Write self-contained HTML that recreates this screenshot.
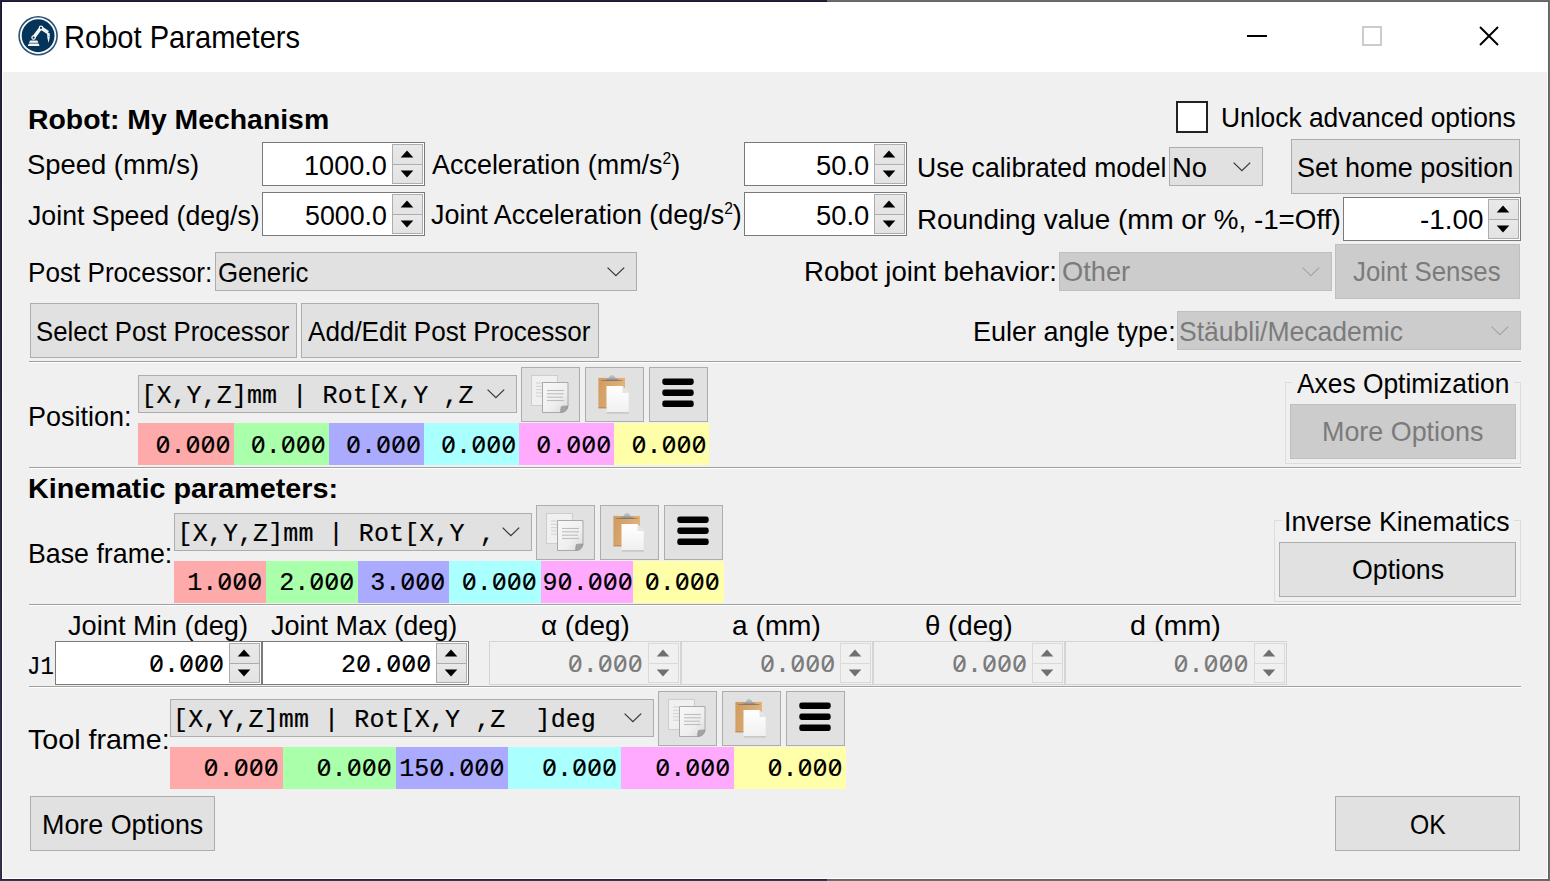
<!DOCTYPE html><html><head><meta charset="utf-8"><style>
html,body{margin:0;padding:0;width:1550px;height:881px;overflow:hidden;background:#f0f0f0;font-family:'Liberation Sans',sans-serif}
.t{position:absolute;white-space:pre;line-height:1;transform-origin:0 0}
.z{position:relative;display:inline-block}
.z::before{content:"";position:absolute;left:4.9px;top:7.6px;width:5px;height:6px;background:var(--bg)}
.z::after{content:"";position:absolute;left:6.5px;top:4.5px;width:1.9px;height:12.6px;background:currentColor;transform:rotate(35deg)}
</style></head><body>
<div style="position:absolute;left:0px;top:0px;width:1550px;height:881px;box-sizing:border-box;background:#6c6c6c"></div>
<div style="position:absolute;left:1px;top:1px;width:1548px;height:879px;box-sizing:border-box;background:#646464"></div>
<div style="position:absolute;left:0px;top:0px;width:827px;height:881px;box-sizing:border-box;background:linear-gradient(#22223a,#34344c)"></div>
<div style="position:absolute;left:1px;top:1px;width:826px;height:879px;box-sizing:border-box;background:linear-gradient(#16162c,#26263e)"></div>
<div style="position:absolute;left:2px;top:2px;width:1546px;height:877px;box-sizing:border-box;background:#ffffff"></div>
<div style="position:absolute;left:3px;top:72px;width:1544px;height:806px;box-sizing:border-box;background:#f0f0f0"></div>
<div style="position:absolute;left:2px;top:2px;width:1546px;height:70px;box-sizing:border-box;background:#ffffff"></div>
<svg style="position:absolute;left:17px;top:15px" width="42" height="42" viewBox="0 0 42 42">
<circle cx="21.1" cy="20.75" r="19.8" fill="#2b5274"/>
<circle cx="21.1" cy="20.75" r="18.2" fill="#ffffff"/>
<circle cx="21.1" cy="20.75" r="16.4" fill="#04345a"/>
<polygon points="10.8,31 22.6,31 20.4,25.6 13,25.6" fill="#f4f4f4"/>
<line x1="11" y1="28.2" x2="22" y2="28.2" stroke="#04345a" stroke-width="0.7"/>
<g stroke="#f4f4f4" fill="none" stroke-width="3.4">
<line x1="16.6" y1="22.6" x2="23.8" y2="13"/>
<line x1="24.2" y1="13" x2="31" y2="17.5"/>
</g>
<circle cx="16.6" cy="22.6" r="2.3" fill="#f4f4f4"/>
<circle cx="16.6" cy="22.6" r="1.1" fill="#04345a"/>
<circle cx="24" cy="12.9" r="2.3" fill="#f4f4f4"/>
<circle cx="24" cy="12.9" r="1.1" fill="#04345a"/>
<polygon points="30,17.5 32.6,18 32.8,21 30.2,21" fill="#f4f4f4"/>
<polygon points="30,21.2 33,21.2 31.6,28" fill="#f4f4f4"/>
</svg>
<div class="t" style="left:63.59px;top:22.07px;font-family:'Liberation Sans';font-size:30.5px;font-weight:400;color:#000;transform:scaleX(0.9537);">Robot Parameters</div>
<div style="position:absolute;left:1247px;top:35px;width:20px;height:2px;box-sizing:border-box;background:#000"></div>
<div style="position:absolute;left:1362px;top:26px;width:20px;height:20px;box-sizing:border-box;border:2px solid #cccccc"></div>
<svg style="position:absolute;left:1478px;top:25px" width="22" height="22"><path d="M2,2 L20,20 M20,2 L2,20" stroke="#000" stroke-width="2"/></svg>
<div class="t" style="left:28.31px;top:104.78px;font-family:'Liberation Sans';font-size:28.5px;font-weight:700;color:#000;transform:scaleX(0.9957);">Robot: My Mechanism</div>
<div style="position:absolute;left:1176px;top:101px;width:32px;height:32px;box-sizing:border-box;background:#fff;border:2px solid #222"></div>
<div class="t" style="left:1221.45px;top:103.28px;font-family:'Liberation Sans';font-size:28.5px;font-weight:400;color:#000;transform:scaleX(0.9253);">Unlock advanced options</div>
<div class="t" style="left:27.38px;top:150.47px;font-family:'Liberation Sans';font-size:28.5px;font-weight:400;color:#000;transform:scaleX(0.9611);">Speed (mm/s)</div>
<div style="position:absolute;left:262px;top:142px;width:163px;height:44px;box-sizing:border-box;background:#fff;border:1px solid #7a7a7a"></div>
<div style="position:absolute;left:392px;top:144px;width:31px;height:21px;box-sizing:border-box;background:linear-gradient(#e9e9e9,#e3e3e3);border:1px solid #adadad"></div>
<div style="position:absolute;left:392px;top:164px;width:31px;height:20px;box-sizing:border-box;background:linear-gradient(#e9e9e9,#e3e3e3);border:1px solid #adadad"></div>
<svg style="position:absolute;left:0;top:0;overflow:visible" width="1" height="1"><polygon points="400.70,157.40 413.30,157.40 407.00,150.60" fill="#000"/></svg>
<svg style="position:absolute;left:0;top:0;overflow:visible" width="1" height="1"><polygon points="400.70,170.60 413.30,170.60 407.00,177.40" fill="#000"/></svg>
<div class="t" style="left:304.30px;top:150.97px;font-family:'Liberation Sans';font-size:28.5px;font-weight:400;color:#000;transform:scaleX(0.9512);">1000.0</div>
<div class="t" style="left:432.20px;top:149.58px;font-family:'Liberation Sans';font-size:28.5px;font-weight:400;color:#000;transform:scaleX(0.9452);">Acceleration (mm/s<span style="font-size:16.5px;position:relative;top:-9.5px">2</span>)</div>
<div style="position:absolute;left:744px;top:142px;width:163px;height:44px;box-sizing:border-box;background:#fff;border:1px solid #7a7a7a"></div>
<div style="position:absolute;left:874px;top:144px;width:31px;height:21px;box-sizing:border-box;background:linear-gradient(#e9e9e9,#e3e3e3);border:1px solid #adadad"></div>
<div style="position:absolute;left:874px;top:164px;width:31px;height:20px;box-sizing:border-box;background:linear-gradient(#e9e9e9,#e3e3e3);border:1px solid #adadad"></div>
<svg style="position:absolute;left:0;top:0;overflow:visible" width="1" height="1"><polygon points="882.70,157.40 895.30,157.40 889.00,150.60" fill="#000"/></svg>
<svg style="position:absolute;left:0;top:0;overflow:visible" width="1" height="1"><polygon points="882.70,170.60 895.30,170.60 889.00,177.40" fill="#000"/></svg>
<div class="t" style="left:816.14px;top:150.97px;font-family:'Liberation Sans';font-size:28.5px;font-weight:400;color:#000;transform:scaleX(0.9604);">50.0</div>
<div class="t" style="left:917.14px;top:152.68px;font-family:'Liberation Sans';font-size:28.5px;font-weight:400;color:#000;transform:scaleX(0.9318);">Use calibrated model</div>
<div style="position:absolute;left:1169px;top:147px;width:94px;height:39px;box-sizing:border-box;background:#e1e1e1;border:1px solid #adadad"></div>
<svg style="position:absolute;left:1231.5px;top:160.5px" width="20" height="12"><polyline points="1.6,1.6 9.9,9.7 18.2,1.6" fill="none" stroke="#3a3a3a" stroke-width="1.3"/></svg>
<div class="t" style="left:1171.88px;top:152.68px;font-family:'Liberation Sans';font-size:28.5px;font-weight:400;color:#000;transform:scaleX(0.9576);">No</div>
<div style="position:absolute;left:1291px;top:139px;width:229px;height:55px;box-sizing:border-box;background:#e1e1e1;border:1px solid #adadad"></div>
<div class="t" style="left:1296.60px;top:152.68px;font-family:'Liberation Sans';font-size:28.5px;font-weight:400;color:#000;transform:scaleX(0.9482);">Set home position</div>
<div class="t" style="left:28.36px;top:200.78px;font-family:'Liberation Sans';font-size:28.5px;font-weight:400;color:#000;transform:scaleX(0.9376);">Joint Speed (deg/s)</div>
<div style="position:absolute;left:262px;top:192px;width:163px;height:44px;box-sizing:border-box;background:#fff;border:1px solid #7a7a7a"></div>
<div style="position:absolute;left:392px;top:194px;width:31px;height:21px;box-sizing:border-box;background:linear-gradient(#e9e9e9,#e3e3e3);border:1px solid #adadad"></div>
<div style="position:absolute;left:392px;top:214px;width:31px;height:20px;box-sizing:border-box;background:linear-gradient(#e9e9e9,#e3e3e3);border:1px solid #adadad"></div>
<svg style="position:absolute;left:0;top:0;overflow:visible" width="1" height="1"><polygon points="400.70,207.40 413.30,207.40 407.00,200.60" fill="#000"/></svg>
<svg style="position:absolute;left:0;top:0;overflow:visible" width="1" height="1"><polygon points="400.70,220.60 413.30,220.60 407.00,227.40" fill="#000"/></svg>
<div class="t" style="left:305.26px;top:200.78px;font-family:'Liberation Sans';font-size:28.5px;font-weight:400;color:#000;transform:scaleX(0.9400);">5000.0</div>
<div class="t" style="left:431.26px;top:199.58px;font-family:'Liberation Sans';font-size:28.5px;font-weight:400;color:#000;transform:scaleX(0.9440);">Joint Acceleration (deg/s<span style="font-size:16.5px;position:relative;top:-9.5px">2</span>)</div>
<div style="position:absolute;left:744px;top:192px;width:163px;height:44px;box-sizing:border-box;background:#fff;border:1px solid #7a7a7a"></div>
<div style="position:absolute;left:874px;top:194px;width:31px;height:21px;box-sizing:border-box;background:linear-gradient(#e9e9e9,#e3e3e3);border:1px solid #adadad"></div>
<div style="position:absolute;left:874px;top:214px;width:31px;height:20px;box-sizing:border-box;background:linear-gradient(#e9e9e9,#e3e3e3);border:1px solid #adadad"></div>
<svg style="position:absolute;left:0;top:0;overflow:visible" width="1" height="1"><polygon points="882.70,207.40 895.30,207.40 889.00,200.60" fill="#000"/></svg>
<svg style="position:absolute;left:0;top:0;overflow:visible" width="1" height="1"><polygon points="882.70,220.60 895.30,220.60 889.00,227.40" fill="#000"/></svg>
<div class="t" style="left:816.14px;top:200.78px;font-family:'Liberation Sans';font-size:28.5px;font-weight:400;color:#000;transform:scaleX(0.9604);">50.0</div>
<div class="t" style="left:917.05px;top:205.18px;font-family:'Liberation Sans';font-size:28.5px;font-weight:400;color:#000;transform:scaleX(0.9756);">Rounding value (mm or %, -1=Off)</div>
<div style="position:absolute;left:1343px;top:197px;width:178px;height:44px;box-sizing:border-box;background:#fff;border:1px solid #7a7a7a"></div>
<div style="position:absolute;left:1488px;top:199px;width:31px;height:21px;box-sizing:border-box;background:linear-gradient(#e9e9e9,#e3e3e3);border:1px solid #adadad"></div>
<div style="position:absolute;left:1488px;top:219px;width:31px;height:20px;box-sizing:border-box;background:linear-gradient(#e9e9e9,#e3e3e3);border:1px solid #adadad"></div>
<svg style="position:absolute;left:0;top:0;overflow:visible" width="1" height="1"><polygon points="1496.70,212.40 1509.30,212.40 1503.00,205.60" fill="#000"/></svg>
<svg style="position:absolute;left:0;top:0;overflow:visible" width="1" height="1"><polygon points="1496.70,225.60 1509.30,225.60 1503.00,232.40" fill="#000"/></svg>
<div class="t" style="left:1419.72px;top:205.18px;font-family:'Liberation Sans';font-size:28.5px;font-weight:400;color:#000;transform:scaleX(0.9778);">-1.00</div>
<div class="t" style="left:28.07px;top:257.97px;font-family:'Liberation Sans';font-size:28.5px;font-weight:400;color:#000;transform:scaleX(0.9157);">Post Processor:</div>
<div style="position:absolute;left:215px;top:252px;width:422px;height:39px;box-sizing:border-box;background:#e1e1e1;border:1px solid #adadad"></div>
<svg style="position:absolute;left:605.7px;top:265.5px" width="20" height="12"><polyline points="1.6,1.6 9.9,9.7 18.2,1.6" fill="none" stroke="#3a3a3a" stroke-width="1.3"/></svg>
<div class="t" style="left:218.29px;top:257.77px;font-family:'Liberation Sans';font-size:28.5px;font-weight:400;color:#000;transform:scaleX(0.9061);">Generic</div>
<div class="t" style="left:803.66px;top:257.38px;font-family:'Liberation Sans';font-size:28.5px;font-weight:400;color:#000;transform:scaleX(0.9677);">Robot joint behavior:</div>
<div style="position:absolute;left:1059px;top:252px;width:273px;height:39px;box-sizing:border-box;background:#cccccc;border:1px solid #bfbfbf"></div>
<svg style="position:absolute;left:1300.6px;top:265.5px" width="20" height="12"><polyline points="1.6,1.6 9.9,9.7 18.2,1.6" fill="none" stroke="#a6a6a6" stroke-width="1.3"/></svg>
<div class="t" style="left:1062.04px;top:257.17px;font-family:'Liberation Sans';font-size:28.5px;font-weight:400;color:#7b7b7b;transform:scaleX(0.9557);">Other</div>
<div style="position:absolute;left:1335px;top:244px;width:185px;height:55px;box-sizing:border-box;background:#cccccc;border:1px solid #bfbfbf"></div>
<div class="t" style="left:1353.20px;top:256.97px;font-family:'Liberation Sans';font-size:28.5px;font-weight:400;color:#7b7b7b;transform:scaleX(0.9043);">Joint Senses</div>
<div style="position:absolute;left:30px;top:303px;width:267px;height:55px;box-sizing:border-box;background:#e1e1e1;border:1px solid #adadad"></div>
<div class="t" style="left:35.69px;top:316.77px;font-family:'Liberation Sans';font-size:28.5px;font-weight:400;color:#000;transform:scaleX(0.9040);">Select Post Processor</div>
<div style="position:absolute;left:301px;top:303px;width:298px;height:55px;box-sizing:border-box;background:#e1e1e1;border:1px solid #adadad"></div>
<div class="t" style="left:308.10px;top:316.57px;font-family:'Liberation Sans';font-size:28.5px;font-weight:400;color:#000;transform:scaleX(0.9146);">Add/Edit Post Processor</div>
<div class="t" style="left:973.11px;top:316.77px;font-family:'Liberation Sans';font-size:28.5px;font-weight:400;color:#000;transform:scaleX(0.9474);">Euler angle type:</div>
<div style="position:absolute;left:1177px;top:311px;width:344px;height:39px;box-sizing:border-box;background:#cccccc;border:1px solid #bfbfbf"></div>
<svg style="position:absolute;left:1489.5px;top:324.5px" width="20" height="12"><polyline points="1.6,1.6 9.9,9.7 18.2,1.6" fill="none" stroke="#a6a6a6" stroke-width="1.3"/></svg>
<div class="t" style="left:1178.84px;top:316.57px;font-family:'Liberation Sans';font-size:28.5px;font-weight:400;color:#7b7b7b;transform:scaleX(0.9303);">Stäubli/Mecademic</div>
<div style="position:absolute;left:29px;top:361px;width:1492px;height:1px;box-sizing:border-box;background:#a0a0a0"></div>
<div style="position:absolute;left:29px;top:362px;width:1492px;height:1px;box-sizing:border-box;background:#ffffff"></div>
<div class="t" style="left:28.01px;top:401.88px;font-family:'Liberation Sans';font-size:28.5px;font-weight:400;color:#000;transform:scaleX(0.9467);">Position:</div>
<div style="position:absolute;left:138px;top:375px;width:379px;height:38px;box-sizing:border-box;background:#e1e1e1;border:1px solid #adadad"></div>
<svg style="position:absolute;left:485.5px;top:388.0px" width="20" height="12"><polyline points="1.6,1.6 9.9,9.7 18.2,1.6" fill="none" stroke="#3a3a3a" stroke-width="1.3"/></svg>
<div class="t" style="left:141.30px;top:384.00px;font-family:'Liberation Mono';font-size:25px;font-weight:400;color:#000;-webkit-text-stroke:0.2px #000;letter-spacing:0.1px;">[X,Y,Z]mm | Rot[X,Y ,Z</div>
<div style="position:absolute;left:521px;top:367px;width:59px;height:55px;box-sizing:border-box;background:#e1e1e1;border:1px solid #adadad"></div>
<div style="position:absolute;left:585px;top:367px;width:59px;height:55px;box-sizing:border-box;background:#e1e1e1;border:1px solid #adadad"></div>
<div style="position:absolute;left:649px;top:367px;width:59px;height:55px;box-sizing:border-box;background:#e1e1e1;border:1px solid #adadad"></div>
<svg style="position:absolute;left:521px;top:367px" width="59" height="55" viewBox="0 0 59 55">
<defs><linearGradient id="pg521" x1="0" y1="0" x2="1" y2="1"><stop offset="0" stop-color="#f8f8f8"/><stop offset="0.6" stop-color="#efefef"/><stop offset="1" stop-color="#d8d8d8"/></linearGradient></defs>
<rect x="10.5" y="8.5" width="26" height="30" fill="#f0f0f0" stroke="#cdcdcd" stroke-width="1"/>
<g stroke="#d2d2d2" stroke-width="1"><line x1="15" y1="16" x2="21" y2="16"/><line x1="15" y1="19.3" x2="21" y2="19.3"/><line x1="15" y1="22.6" x2="21" y2="22.6"/><line x1="15" y1="25.9" x2="21" y2="25.9"/><line x1="15" y1="29.2" x2="21" y2="29.2"/></g>
<path d="M21.5,15.5 H47 V39 Q46,45.3 39.5,45.5 H21.5 Z" fill="url(#pg521)" stroke="#a9a9a9" stroke-width="1"/>
<path d="M47,39 Q43,38.6 40.2,39.6 Q39.5,43 39.5,45.5 Q46,45.3 47,39 Z" fill="#a3a3a3" stroke="#8f8f8f" stroke-width="0.5"/>
<g stroke="#bdbdbd" stroke-width="1.1"><line x1="26" y1="23.5" x2="43" y2="23.5"/><line x1="26" y1="26.8" x2="43" y2="26.8"/><line x1="26" y1="30.2" x2="42" y2="30.2"/><line x1="26" y1="33.5" x2="43" y2="33.5"/></g>
</svg>
<svg style="position:absolute;left:585px;top:367px" width="59" height="55" viewBox="0 0 59 55">
<defs><linearGradient id="cb585" x1="0" y1="0" x2="1" y2="0.3"><stop offset="0" stop-color="#cf9a5e"/><stop offset="1" stop-color="#e2b47e"/></linearGradient>
<linearGradient id="cl585" x1="0" y1="0" x2="0" y2="1"><stop offset="0" stop-color="#cfcfcf"/><stop offset="0.7" stop-color="#a0a0a0"/><stop offset="1" stop-color="#707070"/></linearGradient>
<linearGradient id="pp585" x1="0" y1="0" x2="0" y2="1"><stop offset="0" stop-color="#ffffff"/><stop offset="1" stop-color="#f0f0f0"/></linearGradient></defs>
<rect x="13.4" y="10.9" width="26.6" height="30.3" fill="url(#cb585)"/>
<rect x="13.4" y="40.4" width="26.6" height="0.9" fill="#b58450"/>
<rect x="16.2" y="13" width="21.3" height="0.9" fill="#8a6a48" opacity="0.7"/>
<path d="M19,13.8 Q21,12 23.5,11 Q25,7.8 27,7.8 Q29,7.8 30.5,11 Q33,12 34.6,13.8 Z" fill="url(#cl585)"/>
<path d="M21.5,19 H37.5 L43.7,26 V45.3 H21.5 Z" fill="url(#pp585)"/>
<path d="M37.5,19 V26 H43.7 Z" fill="#e4e4e4"/>
<rect x="21.8" y="45.3" width="22" height="1.2" fill="#bdbdbd"/>
</svg>
<svg style="position:absolute;left:649px;top:367px" width="59" height="55" viewBox="0 0 59 55">
<g fill="#000"><rect x="13.3" y="11.4" width="31.4" height="6.5" rx="2.4"/><rect x="13.3" y="22.5" width="31.4" height="6.5" rx="2.4"/><rect x="13.3" y="33.6" width="31.4" height="6.5" rx="2.4"/></g>
</svg>
<div style="position:absolute;left:138px;top:423px;width:96px;height:42px;box-sizing:border-box;background:#ffaaaa"></div>
<div style="position:absolute;left:234px;top:423px;width:95px;height:42px;box-sizing:border-box;background:#aaffaa"></div>
<div style="position:absolute;left:329px;top:423px;width:95px;height:42px;box-sizing:border-box;background:#aaaaff"></div>
<div style="position:absolute;left:424px;top:423px;width:95px;height:42px;box-sizing:border-box;background:#aaffff"></div>
<div style="position:absolute;left:519px;top:423px;width:95px;height:42px;box-sizing:border-box;background:#ffaaff"></div>
<div style="position:absolute;left:614px;top:423px;width:95px;height:42px;box-sizing:border-box;background:#ffffaa"></div>
<div class="t" style="left:155.50px;top:433.60px;font-family:'Liberation Mono';font-size:25px;font-weight:400;color:#000;-webkit-text-stroke:0.2px #000;--bg:#ffaaaa;"><span class="z">0</span>.<span class="z">0</span><span class="z">0</span><span class="z">0</span></div>
<div class="t" style="left:250.70px;top:433.60px;font-family:'Liberation Mono';font-size:25px;font-weight:400;color:#000;-webkit-text-stroke:0.2px #000;--bg:#aaffaa;"><span class="z">0</span>.<span class="z">0</span><span class="z">0</span><span class="z">0</span></div>
<div class="t" style="left:345.90px;top:433.60px;font-family:'Liberation Mono';font-size:25px;font-weight:400;color:#000;-webkit-text-stroke:0.2px #000;--bg:#aaaaff;"><span class="z">0</span>.<span class="z">0</span><span class="z">0</span><span class="z">0</span></div>
<div class="t" style="left:441.10px;top:433.60px;font-family:'Liberation Mono';font-size:25px;font-weight:400;color:#000;-webkit-text-stroke:0.2px #000;--bg:#aaffff;"><span class="z">0</span>.<span class="z">0</span><span class="z">0</span><span class="z">0</span></div>
<div class="t" style="left:536.30px;top:433.60px;font-family:'Liberation Mono';font-size:25px;font-weight:400;color:#000;-webkit-text-stroke:0.2px #000;--bg:#ffaaff;"><span class="z">0</span>.<span class="z">0</span><span class="z">0</span><span class="z">0</span></div>
<div class="t" style="left:631.50px;top:433.60px;font-family:'Liberation Mono';font-size:25px;font-weight:400;color:#000;-webkit-text-stroke:0.2px #000;--bg:#ffffaa;"><span class="z">0</span>.<span class="z">0</span><span class="z">0</span><span class="z">0</span></div>
<div style="position:absolute;left:1285px;top:382px;width:236px;height:82px;box-sizing:border-box;border:1px solid #dcdcdc"></div>
<div style="position:absolute;left:1292px;top:368px;width:222px;height:30px;box-sizing:border-box;background:#f0f0f0"></div>
<div class="t" style="left:1297.40px;top:368.77px;font-family:'Liberation Sans';font-size:28.5px;font-weight:400;color:#000;transform:scaleX(0.9250);">Axes Optimization</div>
<div style="position:absolute;left:1290px;top:404px;width:226px;height:55px;box-sizing:border-box;background:#cccccc;border:1px solid #bfbfbf"></div>
<div class="t" style="left:1321.71px;top:417.17px;font-family:'Liberation Sans';font-size:28.5px;font-weight:400;color:#7b7b7b;transform:scaleX(0.9435);">More Options</div>
<div style="position:absolute;left:29px;top:467px;width:1492px;height:1px;box-sizing:border-box;background:#a0a0a0"></div>
<div style="position:absolute;left:29px;top:468px;width:1492px;height:1px;box-sizing:border-box;background:#ffffff"></div>
<div class="t" style="left:28.48px;top:473.77px;font-family:'Liberation Sans';font-size:28.5px;font-weight:700;color:#000;transform:scaleX(1.0089);">Kinematic parameters:</div>
<div class="t" style="left:28.32px;top:539.48px;font-family:'Liberation Sans';font-size:28.5px;font-weight:400;color:#000;transform:scaleX(0.9389);">Base frame:</div>
<div style="position:absolute;left:174px;top:513px;width:358px;height:38px;box-sizing:border-box;background:#e1e1e1;border:1px solid #adadad"></div>
<svg style="position:absolute;left:500.5px;top:526.0px" width="20" height="12"><polyline points="1.6,1.6 9.9,9.7 18.2,1.6" fill="none" stroke="#3a3a3a" stroke-width="1.3"/></svg>
<div class="t" style="left:177.60px;top:521.50px;font-family:'Liberation Mono';font-size:25px;font-weight:400;color:#000;-webkit-text-stroke:0.2px #000;letter-spacing:0.1px;">[X,Y,Z]mm | Rot[X,Y ,</div>
<div style="position:absolute;left:536px;top:505px;width:59px;height:55px;box-sizing:border-box;background:#e1e1e1;border:1px solid #adadad"></div>
<div style="position:absolute;left:600px;top:505px;width:59px;height:55px;box-sizing:border-box;background:#e1e1e1;border:1px solid #adadad"></div>
<div style="position:absolute;left:664px;top:505px;width:59px;height:55px;box-sizing:border-box;background:#e1e1e1;border:1px solid #adadad"></div>
<svg style="position:absolute;left:536px;top:505px" width="59" height="55" viewBox="0 0 59 55">
<defs><linearGradient id="pg536" x1="0" y1="0" x2="1" y2="1"><stop offset="0" stop-color="#f8f8f8"/><stop offset="0.6" stop-color="#efefef"/><stop offset="1" stop-color="#d8d8d8"/></linearGradient></defs>
<rect x="10.5" y="8.5" width="26" height="30" fill="#f0f0f0" stroke="#cdcdcd" stroke-width="1"/>
<g stroke="#d2d2d2" stroke-width="1"><line x1="15" y1="16" x2="21" y2="16"/><line x1="15" y1="19.3" x2="21" y2="19.3"/><line x1="15" y1="22.6" x2="21" y2="22.6"/><line x1="15" y1="25.9" x2="21" y2="25.9"/><line x1="15" y1="29.2" x2="21" y2="29.2"/></g>
<path d="M21.5,15.5 H47 V39 Q46,45.3 39.5,45.5 H21.5 Z" fill="url(#pg536)" stroke="#a9a9a9" stroke-width="1"/>
<path d="M47,39 Q43,38.6 40.2,39.6 Q39.5,43 39.5,45.5 Q46,45.3 47,39 Z" fill="#a3a3a3" stroke="#8f8f8f" stroke-width="0.5"/>
<g stroke="#bdbdbd" stroke-width="1.1"><line x1="26" y1="23.5" x2="43" y2="23.5"/><line x1="26" y1="26.8" x2="43" y2="26.8"/><line x1="26" y1="30.2" x2="42" y2="30.2"/><line x1="26" y1="33.5" x2="43" y2="33.5"/></g>
</svg>
<svg style="position:absolute;left:600px;top:505px" width="59" height="55" viewBox="0 0 59 55">
<defs><linearGradient id="cb600" x1="0" y1="0" x2="1" y2="0.3"><stop offset="0" stop-color="#cf9a5e"/><stop offset="1" stop-color="#e2b47e"/></linearGradient>
<linearGradient id="cl600" x1="0" y1="0" x2="0" y2="1"><stop offset="0" stop-color="#cfcfcf"/><stop offset="0.7" stop-color="#a0a0a0"/><stop offset="1" stop-color="#707070"/></linearGradient>
<linearGradient id="pp600" x1="0" y1="0" x2="0" y2="1"><stop offset="0" stop-color="#ffffff"/><stop offset="1" stop-color="#f0f0f0"/></linearGradient></defs>
<rect x="13.4" y="10.9" width="26.6" height="30.3" fill="url(#cb600)"/>
<rect x="13.4" y="40.4" width="26.6" height="0.9" fill="#b58450"/>
<rect x="16.2" y="13" width="21.3" height="0.9" fill="#8a6a48" opacity="0.7"/>
<path d="M19,13.8 Q21,12 23.5,11 Q25,7.8 27,7.8 Q29,7.8 30.5,11 Q33,12 34.6,13.8 Z" fill="url(#cl600)"/>
<path d="M21.5,19 H37.5 L43.7,26 V45.3 H21.5 Z" fill="url(#pp600)"/>
<path d="M37.5,19 V26 H43.7 Z" fill="#e4e4e4"/>
<rect x="21.8" y="45.3" width="22" height="1.2" fill="#bdbdbd"/>
</svg>
<svg style="position:absolute;left:664px;top:505px" width="59" height="55" viewBox="0 0 59 55">
<g fill="#000"><rect x="13.3" y="11.4" width="31.4" height="6.5" rx="2.4"/><rect x="13.3" y="22.5" width="31.4" height="6.5" rx="2.4"/><rect x="13.3" y="33.6" width="31.4" height="6.5" rx="2.4"/></g>
</svg>
<div style="position:absolute;left:174px;top:561px;width:92px;height:42px;box-sizing:border-box;background:#ffaaaa"></div>
<div style="position:absolute;left:266px;top:561px;width:92px;height:42px;box-sizing:border-box;background:#aaffaa"></div>
<div style="position:absolute;left:358px;top:561px;width:91px;height:42px;box-sizing:border-box;background:#aaaaff"></div>
<div style="position:absolute;left:449px;top:561px;width:92px;height:42px;box-sizing:border-box;background:#aaffff"></div>
<div style="position:absolute;left:541px;top:561px;width:92px;height:42px;box-sizing:border-box;background:#ffaaff"></div>
<div style="position:absolute;left:633px;top:561px;width:91px;height:42px;box-sizing:border-box;background:#ffffaa"></div>
<div class="t" style="left:187.20px;top:571.30px;font-family:'Liberation Mono';font-size:25px;font-weight:400;color:#000;-webkit-text-stroke:0.2px #000;--bg:#ffaaaa;">1.<span class="z">0</span><span class="z">0</span><span class="z">0</span></div>
<div class="t" style="left:279.20px;top:571.30px;font-family:'Liberation Mono';font-size:25px;font-weight:400;color:#000;-webkit-text-stroke:0.2px #000;--bg:#aaffaa;">2.<span class="z">0</span><span class="z">0</span><span class="z">0</span></div>
<div class="t" style="left:370.20px;top:571.30px;font-family:'Liberation Mono';font-size:25px;font-weight:400;color:#000;-webkit-text-stroke:0.2px #000;--bg:#aaaaff;">3.<span class="z">0</span><span class="z">0</span><span class="z">0</span></div>
<div class="t" style="left:461.80px;top:571.30px;font-family:'Liberation Mono';font-size:25px;font-weight:400;color:#000;-webkit-text-stroke:0.2px #000;--bg:#aaffff;"><span class="z">0</span>.<span class="z">0</span><span class="z">0</span><span class="z">0</span></div>
<div class="t" style="left:542.60px;top:571.30px;font-family:'Liberation Mono';font-size:25px;font-weight:400;color:#000;-webkit-text-stroke:0.2px #000;--bg:#ffaaff;">9<span class="z">0</span>.<span class="z">0</span><span class="z">0</span><span class="z">0</span></div>
<div class="t" style="left:644.70px;top:571.30px;font-family:'Liberation Mono';font-size:25px;font-weight:400;color:#000;-webkit-text-stroke:0.2px #000;--bg:#ffffaa;"><span class="z">0</span>.<span class="z">0</span><span class="z">0</span><span class="z">0</span></div>
<div style="position:absolute;left:1274px;top:520px;width:247px;height:82px;box-sizing:border-box;border:1px solid #dcdcdc"></div>
<div style="position:absolute;left:1282px;top:505px;width:232px;height:30px;box-sizing:border-box;background:#f0f0f0"></div>
<div class="t" style="left:1283.99px;top:506.77px;font-family:'Liberation Sans';font-size:28.5px;font-weight:400;color:#000;transform:scaleX(0.9367);">Inverse Kinematics</div>
<div style="position:absolute;left:1279px;top:542px;width:237px;height:55px;box-sizing:border-box;background:#e1e1e1;border:1px solid #adadad"></div>
<div class="t" style="left:1351.66px;top:555.38px;font-family:'Liberation Sans';font-size:28.5px;font-weight:400;color:#000;transform:scaleX(0.9375);">Options</div>
<div style="position:absolute;left:29px;top:604px;width:1492px;height:1px;box-sizing:border-box;background:#a0a0a0"></div>
<div style="position:absolute;left:29px;top:605px;width:1492px;height:1px;box-sizing:border-box;background:#ffffff"></div>
<div class="t" style="left:67.94px;top:610.77px;font-family:'Liberation Sans';font-size:28.5px;font-weight:400;color:#000;transform:scaleX(0.9554);">Joint Min (deg)</div>
<div class="t" style="left:271.35px;top:610.77px;font-family:'Liberation Sans';font-size:28.5px;font-weight:400;color:#000;transform:scaleX(0.9485);">Joint Max (deg)</div>
<div class="t" style="left:540.52px;top:610.77px;font-family:'Liberation Sans';font-size:28.5px;font-weight:400;color:#000;transform:scaleX(0.9773);">α (deg)</div>
<div class="t" style="left:732.22px;top:610.77px;font-family:'Liberation Sans';font-size:28.5px;font-weight:400;color:#000;transform:scaleX(0.9841);">a (mm)</div>
<div class="t" style="left:924.93px;top:610.77px;font-family:'Liberation Sans';font-size:28.5px;font-weight:400;color:#000;transform:scaleX(0.9705);">θ (deg)</div>
<div class="t" style="left:1129.99px;top:610.77px;font-family:'Liberation Sans';font-size:28.5px;font-weight:400;color:#000;transform:scaleX(1.0068);">d (mm)</div>
<div class="t" style="left:27.11px;top:655.20px;font-family:'Liberation Mono';font-size:25px;font-weight:400;color:#000;transform:scaleX(0.8926);-webkit-text-stroke:0.2px #000;">J1</div>
<div style="position:absolute;left:55px;top:641px;width:207px;height:44px;box-sizing:border-box;background:#fff;border:1px solid #7a7a7a"></div>
<div style="position:absolute;left:229px;top:643px;width:31px;height:21px;box-sizing:border-box;background:linear-gradient(#e9e9e9,#e3e3e3);border:1px solid #adadad"></div>
<div style="position:absolute;left:229px;top:663px;width:31px;height:20px;box-sizing:border-box;background:linear-gradient(#e9e9e9,#e3e3e3);border:1px solid #adadad"></div>
<svg style="position:absolute;left:0;top:0;overflow:visible" width="1" height="1"><polygon points="237.70,656.40 250.30,656.40 244.00,649.60" fill="#000"/></svg>
<svg style="position:absolute;left:0;top:0;overflow:visible" width="1" height="1"><polygon points="237.70,669.60 250.30,669.60 244.00,676.40" fill="#000"/></svg>
<div class="t" style="left:148.90px;top:653.30px;font-family:'Liberation Mono';font-size:25px;font-weight:400;color:#000;-webkit-text-stroke:0.2px #000;--bg:#fff;"><span class="z">0</span>.<span class="z">0</span><span class="z">0</span><span class="z">0</span></div>
<div style="position:absolute;left:262px;top:641px;width:207px;height:44px;box-sizing:border-box;background:#fff;border:1px solid #7a7a7a"></div>
<div style="position:absolute;left:436px;top:643px;width:31px;height:21px;box-sizing:border-box;background:linear-gradient(#e9e9e9,#e3e3e3);border:1px solid #adadad"></div>
<div style="position:absolute;left:436px;top:663px;width:31px;height:20px;box-sizing:border-box;background:linear-gradient(#e9e9e9,#e3e3e3);border:1px solid #adadad"></div>
<svg style="position:absolute;left:0;top:0;overflow:visible" width="1" height="1"><polygon points="444.70,656.40 457.30,656.40 451.00,649.60" fill="#000"/></svg>
<svg style="position:absolute;left:0;top:0;overflow:visible" width="1" height="1"><polygon points="444.70,669.60 457.30,669.60 451.00,676.40" fill="#000"/></svg>
<div class="t" style="left:341.10px;top:653.30px;font-family:'Liberation Mono';font-size:25px;font-weight:400;color:#000;-webkit-text-stroke:0.2px #000;--bg:#fff;">2<span class="z">0</span>.<span class="z">0</span><span class="z">0</span><span class="z">0</span></div>
<div style="position:absolute;left:489px;top:641px;width:192px;height:44px;box-sizing:border-box;background:#f0f0f0;border:1px solid #d4d4d4"></div>
<div style="position:absolute;left:648px;top:643px;width:31px;height:21px;box-sizing:border-box;background:#f0f0f0;border:1px solid #dadada"></div>
<div style="position:absolute;left:648px;top:663px;width:31px;height:20px;box-sizing:border-box;background:#f0f0f0;border:1px solid #dadada"></div>
<svg style="position:absolute;left:0;top:0;overflow:visible" width="1" height="1"><polygon points="656.70,656.40 669.30,656.40 663.00,649.60" fill="#6f6f6f"/></svg>
<svg style="position:absolute;left:0;top:0;overflow:visible" width="1" height="1"><polygon points="656.70,669.60 669.30,669.60 663.00,676.40" fill="#6f6f6f"/></svg>
<div class="t" style="left:567.70px;top:653.30px;font-family:'Liberation Mono';font-size:25px;font-weight:400;color:#7b7b7b;-webkit-text-stroke:0.2px #7b7b7b;--bg:#f0f0f0;"><span class="z">0</span>.<span class="z">0</span><span class="z">0</span><span class="z">0</span></div>
<div style="position:absolute;left:681px;top:641px;width:192px;height:44px;box-sizing:border-box;background:#f0f0f0;border:1px solid #d4d4d4"></div>
<div style="position:absolute;left:840px;top:643px;width:31px;height:21px;box-sizing:border-box;background:#f0f0f0;border:1px solid #dadada"></div>
<div style="position:absolute;left:840px;top:663px;width:31px;height:20px;box-sizing:border-box;background:#f0f0f0;border:1px solid #dadada"></div>
<svg style="position:absolute;left:0;top:0;overflow:visible" width="1" height="1"><polygon points="848.70,656.40 861.30,656.40 855.00,649.60" fill="#6f6f6f"/></svg>
<svg style="position:absolute;left:0;top:0;overflow:visible" width="1" height="1"><polygon points="848.70,669.60 861.30,669.60 855.00,676.40" fill="#6f6f6f"/></svg>
<div class="t" style="left:760.10px;top:653.30px;font-family:'Liberation Mono';font-size:25px;font-weight:400;color:#7b7b7b;-webkit-text-stroke:0.2px #7b7b7b;--bg:#f0f0f0;"><span class="z">0</span>.<span class="z">0</span><span class="z">0</span><span class="z">0</span></div>
<div style="position:absolute;left:873px;top:641px;width:192px;height:44px;box-sizing:border-box;background:#f0f0f0;border:1px solid #d4d4d4"></div>
<div style="position:absolute;left:1032px;top:643px;width:31px;height:21px;box-sizing:border-box;background:#f0f0f0;border:1px solid #dadada"></div>
<div style="position:absolute;left:1032px;top:663px;width:31px;height:20px;box-sizing:border-box;background:#f0f0f0;border:1px solid #dadada"></div>
<svg style="position:absolute;left:0;top:0;overflow:visible" width="1" height="1"><polygon points="1040.70,656.40 1053.30,656.40 1047.00,649.60" fill="#6f6f6f"/></svg>
<svg style="position:absolute;left:0;top:0;overflow:visible" width="1" height="1"><polygon points="1040.70,669.60 1053.30,669.60 1047.00,676.40" fill="#6f6f6f"/></svg>
<div class="t" style="left:952.00px;top:653.30px;font-family:'Liberation Mono';font-size:25px;font-weight:400;color:#7b7b7b;-webkit-text-stroke:0.2px #7b7b7b;--bg:#f0f0f0;"><span class="z">0</span>.<span class="z">0</span><span class="z">0</span><span class="z">0</span></div>
<div style="position:absolute;left:1065px;top:641px;width:222px;height:44px;box-sizing:border-box;background:#f0f0f0;border:1px solid #d4d4d4"></div>
<div style="position:absolute;left:1254px;top:643px;width:31px;height:21px;box-sizing:border-box;background:#f0f0f0;border:1px solid #dadada"></div>
<div style="position:absolute;left:1254px;top:663px;width:31px;height:20px;box-sizing:border-box;background:#f0f0f0;border:1px solid #dadada"></div>
<svg style="position:absolute;left:0;top:0;overflow:visible" width="1" height="1"><polygon points="1262.70,656.40 1275.30,656.40 1269.00,649.60" fill="#6f6f6f"/></svg>
<svg style="position:absolute;left:0;top:0;overflow:visible" width="1" height="1"><polygon points="1262.70,669.60 1275.30,669.60 1269.00,676.40" fill="#6f6f6f"/></svg>
<div class="t" style="left:1173.50px;top:653.30px;font-family:'Liberation Mono';font-size:25px;font-weight:400;color:#7b7b7b;-webkit-text-stroke:0.2px #7b7b7b;--bg:#f0f0f0;"><span class="z">0</span>.<span class="z">0</span><span class="z">0</span><span class="z">0</span></div>
<div style="position:absolute;left:29px;top:686px;width:1492px;height:1px;box-sizing:border-box;background:#a0a0a0"></div>
<div style="position:absolute;left:29px;top:687px;width:1492px;height:1px;box-sizing:border-box;background:#ffffff"></div>
<div class="t" style="left:27.80px;top:725.38px;font-family:'Liberation Sans';font-size:28.5px;font-weight:400;color:#000;transform:scaleX(1.0044);">Tool frame:</div>
<div style="position:absolute;left:170px;top:699px;width:484px;height:38px;box-sizing:border-box;background:#e1e1e1;border:1px solid #adadad"></div>
<svg style="position:absolute;left:622.5px;top:712.0px" width="20" height="12"><polyline points="1.6,1.6 9.9,9.7 18.2,1.6" fill="none" stroke="#3a3a3a" stroke-width="1.3"/></svg>
<div class="t" style="left:173.10px;top:708.30px;font-family:'Liberation Mono';font-size:25px;font-weight:400;color:#000;-webkit-text-stroke:0.2px #000;letter-spacing:0.1px;">[X,Y,Z]mm | Rot[X,Y ,Z  ]deg</div>
<div style="position:absolute;left:658px;top:691px;width:59px;height:55px;box-sizing:border-box;background:#e1e1e1;border:1px solid #adadad"></div>
<div style="position:absolute;left:722px;top:691px;width:59px;height:55px;box-sizing:border-box;background:#e1e1e1;border:1px solid #adadad"></div>
<div style="position:absolute;left:786px;top:691px;width:59px;height:55px;box-sizing:border-box;background:#e1e1e1;border:1px solid #adadad"></div>
<svg style="position:absolute;left:658px;top:691px" width="59" height="55" viewBox="0 0 59 55">
<defs><linearGradient id="pg658" x1="0" y1="0" x2="1" y2="1"><stop offset="0" stop-color="#f8f8f8"/><stop offset="0.6" stop-color="#efefef"/><stop offset="1" stop-color="#d8d8d8"/></linearGradient></defs>
<rect x="10.5" y="8.5" width="26" height="30" fill="#f0f0f0" stroke="#cdcdcd" stroke-width="1"/>
<g stroke="#d2d2d2" stroke-width="1"><line x1="15" y1="16" x2="21" y2="16"/><line x1="15" y1="19.3" x2="21" y2="19.3"/><line x1="15" y1="22.6" x2="21" y2="22.6"/><line x1="15" y1="25.9" x2="21" y2="25.9"/><line x1="15" y1="29.2" x2="21" y2="29.2"/></g>
<path d="M21.5,15.5 H47 V39 Q46,45.3 39.5,45.5 H21.5 Z" fill="url(#pg658)" stroke="#a9a9a9" stroke-width="1"/>
<path d="M47,39 Q43,38.6 40.2,39.6 Q39.5,43 39.5,45.5 Q46,45.3 47,39 Z" fill="#a3a3a3" stroke="#8f8f8f" stroke-width="0.5"/>
<g stroke="#bdbdbd" stroke-width="1.1"><line x1="26" y1="23.5" x2="43" y2="23.5"/><line x1="26" y1="26.8" x2="43" y2="26.8"/><line x1="26" y1="30.2" x2="42" y2="30.2"/><line x1="26" y1="33.5" x2="43" y2="33.5"/></g>
</svg>
<svg style="position:absolute;left:722px;top:691px" width="59" height="55" viewBox="0 0 59 55">
<defs><linearGradient id="cb722" x1="0" y1="0" x2="1" y2="0.3"><stop offset="0" stop-color="#cf9a5e"/><stop offset="1" stop-color="#e2b47e"/></linearGradient>
<linearGradient id="cl722" x1="0" y1="0" x2="0" y2="1"><stop offset="0" stop-color="#cfcfcf"/><stop offset="0.7" stop-color="#a0a0a0"/><stop offset="1" stop-color="#707070"/></linearGradient>
<linearGradient id="pp722" x1="0" y1="0" x2="0" y2="1"><stop offset="0" stop-color="#ffffff"/><stop offset="1" stop-color="#f0f0f0"/></linearGradient></defs>
<rect x="13.4" y="10.9" width="26.6" height="30.3" fill="url(#cb722)"/>
<rect x="13.4" y="40.4" width="26.6" height="0.9" fill="#b58450"/>
<rect x="16.2" y="13" width="21.3" height="0.9" fill="#8a6a48" opacity="0.7"/>
<path d="M19,13.8 Q21,12 23.5,11 Q25,7.8 27,7.8 Q29,7.8 30.5,11 Q33,12 34.6,13.8 Z" fill="url(#cl722)"/>
<path d="M21.5,19 H37.5 L43.7,26 V45.3 H21.5 Z" fill="url(#pp722)"/>
<path d="M37.5,19 V26 H43.7 Z" fill="#e4e4e4"/>
<rect x="21.8" y="45.3" width="22" height="1.2" fill="#bdbdbd"/>
</svg>
<svg style="position:absolute;left:786px;top:691px" width="59" height="55" viewBox="0 0 59 55">
<g fill="#000"><rect x="13.3" y="11.4" width="31.4" height="6.5" rx="2.4"/><rect x="13.3" y="22.5" width="31.4" height="6.5" rx="2.4"/><rect x="13.3" y="33.6" width="31.4" height="6.5" rx="2.4"/></g>
</svg>
<div style="position:absolute;left:170px;top:747px;width:113px;height:42px;box-sizing:border-box;background:#ffaaaa"></div>
<div style="position:absolute;left:283px;top:747px;width:113px;height:42px;box-sizing:border-box;background:#aaffaa"></div>
<div style="position:absolute;left:396px;top:747px;width:112px;height:42px;box-sizing:border-box;background:#aaaaff"></div>
<div style="position:absolute;left:508px;top:747px;width:113px;height:42px;box-sizing:border-box;background:#aaffff"></div>
<div style="position:absolute;left:621px;top:747px;width:113px;height:42px;box-sizing:border-box;background:#ffaaff"></div>
<div style="position:absolute;left:734px;top:747px;width:112px;height:42px;box-sizing:border-box;background:#ffffaa"></div>
<div class="t" style="left:203.60px;top:756.90px;font-family:'Liberation Mono';font-size:25px;font-weight:400;color:#000;-webkit-text-stroke:0.2px #000;--bg:#ffaaaa;"><span class="z">0</span>.<span class="z">0</span><span class="z">0</span><span class="z">0</span></div>
<div class="t" style="left:316.60px;top:756.90px;font-family:'Liberation Mono';font-size:25px;font-weight:400;color:#000;-webkit-text-stroke:0.2px #000;--bg:#aaffaa;"><span class="z">0</span>.<span class="z">0</span><span class="z">0</span><span class="z">0</span></div>
<div class="t" style="left:399.30px;top:756.90px;font-family:'Liberation Mono';font-size:25px;font-weight:400;color:#000;-webkit-text-stroke:0.2px #000;--bg:#aaaaff;">15<span class="z">0</span>.<span class="z">0</span><span class="z">0</span><span class="z">0</span></div>
<div class="t" style="left:542.00px;top:756.90px;font-family:'Liberation Mono';font-size:25px;font-weight:400;color:#000;-webkit-text-stroke:0.2px #000;--bg:#aaffff;"><span class="z">0</span>.<span class="z">0</span><span class="z">0</span><span class="z">0</span></div>
<div class="t" style="left:655.30px;top:756.90px;font-family:'Liberation Mono';font-size:25px;font-weight:400;color:#000;-webkit-text-stroke:0.2px #000;--bg:#ffaaff;"><span class="z">0</span>.<span class="z">0</span><span class="z">0</span><span class="z">0</span></div>
<div class="t" style="left:767.40px;top:756.90px;font-family:'Liberation Mono';font-size:25px;font-weight:400;color:#000;-webkit-text-stroke:0.2px #000;--bg:#ffffaa;"><span class="z">0</span>.<span class="z">0</span><span class="z">0</span><span class="z">0</span></div>
<div style="position:absolute;left:30px;top:796px;width:185px;height:55px;box-sizing:border-box;background:#e1e1e1;border:1px solid #adadad"></div>
<div class="t" style="left:41.61px;top:809.67px;font-family:'Liberation Sans';font-size:28.5px;font-weight:400;color:#000;transform:scaleX(0.9429);">More Options</div>
<div style="position:absolute;left:1335px;top:796px;width:185px;height:55px;box-sizing:border-box;background:#e1e1e1;border:1px solid #adadad"></div>
<div class="t" style="left:1409.63px;top:809.77px;font-family:'Liberation Sans';font-size:28.5px;font-weight:400;color:#000;transform:scaleX(0.8675);">OK</div>
</body></html>
